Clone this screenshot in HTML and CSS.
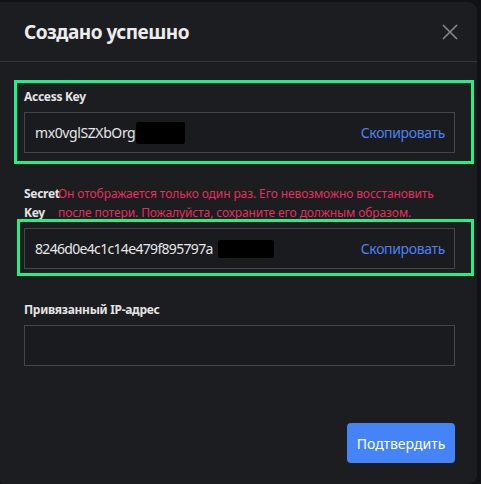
FILE: index.html
```html
<!DOCTYPE html>
<html lang="ru">
<head>
<meta charset="utf-8">
<title>Создано успешно</title>
<link rel="stylesheet" href="styles.css">
</head>
<body>
<div class="modal">
  <div class="modal-header">
    <h2 class="modal-title">Создано успешно</h2>
    <button class="close" aria-label="Закрыть">
      <svg width="16" height="16" viewBox="0 0 16 16"><path d="M1 1L15 15M15 1L1 15" stroke="#858892" stroke-width="1.6" fill="none"/></svg>
    </button>
  </div>
  <div class="modal-body">
    <div class="field hl hl-1">
      <div class="label-row"><span class="lbl">Access Key</span></div>
      <div class="input">
        <span class="val">mx0vglSZXbOrg<span class="redact r1"></span></span>
        <span class="copy">Скопировать</span>
      </div>
    </div>
    <div class="field hl hl-2">
      <div class="label-row"><span class="lbl lbl-narrow">Secret Key</span><span class="warn">Он отображается только один раз. Его невозможно восстановить после потери. Пожалуйста, сохраните его должным образом.</span></div>
      <div class="input">
        <span class="val val-tight">8246d0e4c1c14e479f895797a<span class="redact r2"></span></span>
        <span class="copy">Скопировать</span>
      </div>
    </div>
    <div class="field">
      <div class="label-row"><span class="lbl">Привязанный IP-адрес</span></div>
      <div class="input empty"></div>
    </div>
  </div>
  <div class="modal-footer">
    <button class="btn-primary">Подтвердить</button>
  </div>
</div>
</body>
</html>
```

FILE: styles.css
```css
* { box-sizing: border-box; }
html, body { margin: 0; padding: 0; }
body {
  width: 481px;
  height: 484px;
  background: #111216;
  font-family: "Noto Sans", "Open Sans", sans-serif;
  overflow: hidden;
}
.modal {
  margin-top: 2px;
  width: 477px;
  height: 482px;
  background: #1c1d21;
  border-radius: 0 9px 9px 4px;
  display: flex;
  flex-direction: column;
}
.modal-header {
  height: 60px;
  border-bottom: 1px solid #34353a;
  display: flex;
  align-items: center;
  justify-content: space-between;
  padding: 0 19px 0 24px;
}
.modal-title {
  margin: 0;
  font-size: 19px;
  font-weight: 700;
  color: #ececee;
  letter-spacing: -0.5px;
}
.close {
  background: none;
  border: 0;
  padding: 0;
  width: 16px;
  height: 16px;
  display: flex;
}
.modal-body {
  padding: 25px 22px 0 24px;
}
.field {
  position: relative;
  margin-bottom: 31px;
}
.hl::before {
  content: "";
  position: absolute;
  border: 3px solid #1ff08a;
  pointer-events: none;
}
.hl-1::before { left: -10px; right: -19px; top: -7px; bottom: -11px; }
.hl-2::before { left: -7px; right: -19px; top: 35px; bottom: -7px; }
.label-row {
  display: flex;
  align-items: flex-start;
  line-height: 19px;
  font-size: 12px;
  margin-bottom: 6px;
}
.lbl {
  font-weight: 700;
  color: #e4e4e6;
  letter-spacing: -0.3px;
}
.lbl-narrow { width: 34px; flex: none; }
.warn {
  color: #e3305c;
  letter-spacing: -0.1px;
}
.input {
  height: 41px;
  border: 1px solid #45464c;
  background: #1a1b1e;
  display: flex;
  align-items: center;
  justify-content: space-between;
  padding: 0 9px 0 10px;
  font-size: 14px;
}
.val {
  color: #e6e6e8;
  display: flex;
  align-items: center;
  letter-spacing: -0.4px;
}
.val-tight { letter-spacing: -0.68px; }
.redact { display: inline-block; background: #000; border-radius: 2px; }
.r1 { width: 49px; height: 22px; margin-left: 1px; }
.r2 { width: 56px; height: 18px; margin-left: 5px; }
.copy {
  color: #4c82f2;
  letter-spacing: -0.35px;
}
.modal-footer {
  margin-top: auto;
  display: flex;
  justify-content: flex-end;
  padding: 0 22px 21px 0;
}
.btn-primary {
  height: 40px;
  width: 108px;
  background: #4584f6;
  color: #fff;
  border: 0;
  border-radius: 4px;
  font-family: inherit;
  font-size: 14px;
  padding: 0;
}
```
